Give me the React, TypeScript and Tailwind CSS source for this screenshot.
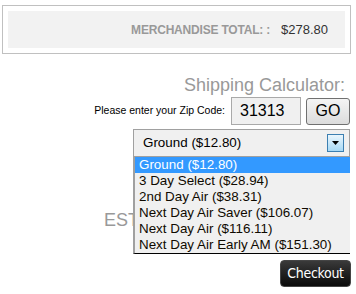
const options = [
  'Ground ($12.80)',
  '3 Day Select ($28.94)',
  '2nd Day Air ($38.31)',
  'Next Day Air Saver ($106.07)',
  'Next Day Air ($116.11)',
  'Next Day Air Early AM ($151.30)',
]

export default function App() {
  return (
    <div className="relative h-[294px] w-[356px] overflow-hidden bg-white pt-[5px] font-['Liberation_Sans',Arial,sans-serif]">
      {/* Merchandise total */}
      <div className="ml-[2px] w-[349px] border border-[#c0c0c0] p-[5px]">
        <div className="flex h-[37px] items-center justify-end bg-[#f2f2f2] pr-[17px] text-[12px]">
          <span className="font-bold tracking-[-0.2px] text-[#999999]">MERCHANDISE TOTAL: :</span>
          <span className="ml-[11px] text-[13px] text-[#333333]">$278.80</span>
        </div>
      </div>

      {/* Shipping calculator */}
      <div className="mt-[20px] pr-[11px] text-right text-[18px] leading-[22px] text-[#999999]">
        Shipping Calculator:
      </div>
      <div className="mt-[1px] flex items-center justify-end gap-[5px] pr-[6px]">
        <span className="mr-[1px] text-[10.5px] text-black">Please enter your Zip Code:</span>
        <div className="flex h-[28px] w-[70px] items-center border border-[#a9a9a9] bg-[#f0f0f0] pl-[8px] text-[16px] text-black">
          31313
        </div>
        <button className="h-[27px] w-[44px] rounded-[3px] border border-[#707070] bg-gradient-to-b from-[#f4f4f4] to-[#dcdcdc] text-[16px] text-black">
          GO
        </button>
      </div>

      {/* Select + open list */}
      <div className="relative ml-[133px] mt-[4px] w-[217px]">
        <div className="flex h-[28px] items-center justify-between border border-[#a0a0a0] bg-[#f0f0f0] pl-[9px] pr-[5px] text-[13.4px] text-black">
          <span>Ground ($12.80)</span>
          <span className="flex h-[18px] w-[17px] items-center justify-center border border-[#3c7fb1] bg-gradient-to-b from-[#eaf6fd] to-[#a7d9f5]">
            <svg width="7" height="4" viewBox="0 0 7 4">
              <path d="M0 0h7L3.5 4z" fill="#000" />
            </svg>
          </span>
        </div>
        <div className="absolute left-0 top-full z-10 w-[217px] border-b border-l-2 border-b-black border-l-[#a0a0a0] bg-[#f0f0f0] text-[13.4px] leading-[16px]">
          {options.map((o, i) => (
            <div
              key={o}
              className={i === 0 ? 'bg-[#3399ff] pl-[4px] text-white' : 'pl-[4px] text-[#0f0a00]'}
            >
              {o}
            </div>
          ))}
        </div>
      </div>

      {/* Estimated shipping (under the list) */}
      <div className="ml-[104px] mt-[52px] text-[18px] leading-[22px] text-[#999999]">
        ESTIMATED SHIPPING:
      </div>

      <div className="mt-[29px] flex justify-end pr-[5px]">
        <button className="h-[27px] w-[71px] rounded-[4px] border border-[#444] bg-gradient-to-b from-[#3a3a3a] to-[#0a0a0a] text-[14px] tracking-[-0.3px] text-white font-['DejaVu_Sans_Condensed','Liberation_Sans',sans-serif]">
          Checkout
        </button>
      </div>
    </div>
  )
}
